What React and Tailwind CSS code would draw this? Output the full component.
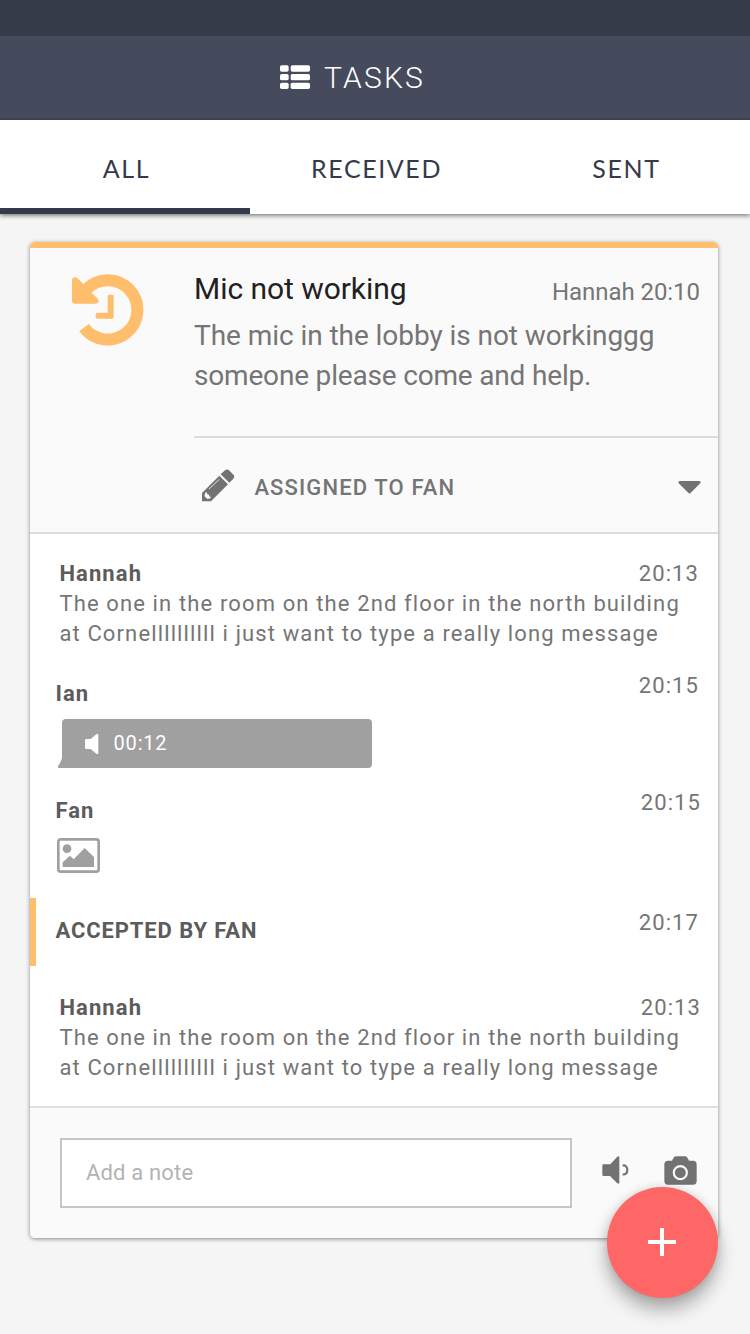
const ListIcon = () => (
  <svg className="h-6 w-[30px]" viewBox="0 0 90 72" fill="#fff">
    <rect x="0" y="1" width="26" height="19" rx="5" />
    <rect x="32" y="1" width="58" height="19" rx="5" />
    <rect x="0" y="27" width="26" height="19" rx="5" />
    <rect x="32" y="27" width="58" height="19" rx="5" />
    <rect x="0" y="53" width="26" height="19" rx="5" />
    <rect x="32" y="53" width="58" height="19" rx="5" />
  </svg>
);

const HistoryIcon = () => (
  <svg className="h-[72px] w-[72px]" viewBox="156 130 216 216">
    <path d="M200 175 A89 89 0 1 1 192 291" fill="none" stroke="#ffbe6b" strokeWidth="36" />
    <path
      d="M156 150 Q156 140 165 140 Q170 140 174 144 L190 160 L215 186 L233 204 Q238 210 235 215 Q232 219 227 219 H165 Q156 219 156 210 Z M263 197 Q263 192 268 192 H276 Q281 192 281 197 V259 Q281 264 276 264 H232 Q227 264 227 259 V251 Q227 246 232 246 H263 Z"
      fill="#ffbe6b"
    />
  </svg>
);

const PencilIcon = () => (
  <svg className="h-[33px] w-[33px]" viewBox="36 28 99 99">
    <path
      d="M36 125 V100 L88 48 L114 74 L63 125 Z M92 44 L105 32 Q111 27 117 32 L131 46 Q135 51 130 57 L118 69 Z"
      fill="#727272"
    />
    <path d="M57 88 L88 59" stroke="#fafafa" strokeWidth="2.5" />
    <path d="M47 97 L51 99 L52 104 L57 105 L58 110 L62 112 L62 116 L52 118 L43 109 Z" fill="#fafafa" />
  </svg>
);

const CaretIcon = () => (
  <svg className="mt-1 h-[13px] w-[23px]" viewBox="0 0 23 13">
    <path d="M1.5 0 H21.5 Q23.5 .6 22 2.5 L13 11.6 Q11.5 13.4 10 11.6 L1 2.5 Q-.5 .6 1.5 0 Z" fill="#727272" />
  </svg>
);

const BubbleTail = () => (
  <svg className="h-[10px] w-1 self-end overflow-visible" viewBox="0 0 4 10">
    <path d="M4.5 0 V10 H1 Q-.8 9.6 0 8 Q3 4 4 0 Z" fill="#a0a0a0" />
  </svg>
);

const PlayIcon = () => (
  <svg className="h-5 w-[14px]" viewBox="195 547 42 60">
    <path d="M198 562 H212 L229 548 Q235 545 235 551 V603 Q235 609 229 606 L212 592 H198 Q195 592 195 589 V565 Q195 562 198 562 Z" fill="#fff" />
  </svg>
);

const ImageIcon = () => (
  <svg className="h-[35px] w-[43px]" viewBox="111 174 129 105">
    <rect x="115" y="178" width="121" height="97" rx="7" fill="none" stroke="#a0a0a0" strokeWidth="8" />
    <circle cx="141" cy="206" r="13" fill="#a0a0a0" />
    <path d="M128 261 V247 L150 227 L161 238 L194 204 L222 231 V261 Z" fill="#a0a0a0" />
  </svg>
);

const SpeakerIcon = () => (
  <svg className="h-7 w-7" viewBox="125 197 84 84">
    <path d="M130 222 H150 L170 200 Q177 195 177 202 V276 Q177 283 170 278 L149 257 H130 Q126 257 126 253 V226 Q126 222 130 222 Z" fill="#727272" />
    <path d="M187 226 C194 223 201 229 201 239 C201 249 194 254 187 252" fill="none" stroke="#727272" strokeWidth="6.5" />
  </svg>
);

const CameraIcon = () => (
  <svg className="h-[29px] w-[33px]" viewBox="311 197 99 87">
    <path d="M323 211 H335 L338 205 Q341 198 348 198 H373 Q380 198 383 205 L386 211 H398 Q409 212 409 222 V272 Q409 283 398 283 H323 Q312 283 312 272 V222 Q312 212 323 211 Z" fill="#727272" />
    <circle cx="360" cy="247" r="19.5" fill="none" stroke="#fafafa" strokeWidth="6.5" />
  </svg>
);

const name = "text-[22px] leading-[29px] font-bold tracking-[1.1px] text-[#5c5c5c]";
const time = "text-[22px] leading-[29px] tracking-[1.1px] text-[#757575]";

const Message = ({ shift }) => (
  <div className="pl-[29.4px]">
    <div className={`flex justify-between ${shift}`}>
      <p className={name}>Hannah</p>
      <p className={time}>20:13</p>
    </div>
    <p className="mt-px text-[22px] leading-[30px] tracking-[1.13px] whitespace-nowrap text-[#757575]">
      The one in the room on the 2nd floor in the north building
      <br />
      at Cornellllllllll i just want to type a really long message
    </p>
  </div>
);

export default function App() {
  return (
    <div className="relative h-[1334px] w-[750px] overflow-hidden bg-[#f5f5f5] font-['Roboto',sans-serif]">
      <div className="h-9 bg-[#353b48]" />
      <header className="flex h-[84px] items-center gap-[14px] border-b-2 border-[#404557] bg-[#454a5c] pl-[280px]">
        <ListIcon />
        <h1 className="text-[30px] leading-[35px] font-[350] tracking-[2.2px] text-white">TASKS</h1>
      </header>
      <nav className="grid h-[94px] grid-cols-3 bg-white text-center font-['Lato',sans-serif] text-[25px] leading-[96px] tracking-[1.6px] text-[#353a4a] shadow-[0_2px_4px_rgba(0,0,0,0.45)]">
        <div className="h-[94px] border-b-[6px] border-[#353a4a] pl-[3px]">ALL</div>
        <div className="pl-[3px]">RECEIVED</div>
        <div className="pl-[3px]">SENT</div>
      </nav>

      <main className="mt-7 ml-[30px] w-[688px] overflow-hidden rounded-[5px] bg-white shadow-[0_1px_4px_rgba(0,0,0,0.45)]">
        <section className="flex h-[292px] border-t-[6px] border-b-2 border-t-[#ffbe6b] border-b-[#dcdcdc] bg-[#fafafa]">
          <div className="w-[164px] pt-[25.5px] pl-[41.8px]">
            <HistoryIcon />
          </div>
          <div className="flex flex-1 flex-col">
            <div className="h-[190px] border-b-2 border-[#dcdcdc] pt-[23px]">
              <div className="flex justify-between pr-[18px]">
                <h2 className="text-[30px] leading-[35px] tracking-[-0.05px] text-[#212121]">Mic not working</h2>
                <p className="pt-[7px] text-2xl leading-7 tracking-[-0.05px] text-[#757575]">Hannah 20:10</p>
              </div>
              <p className="mt-[10px] text-[28px] leading-10 text-[#757575]">
                <span className="tracking-[-0.06px]">The mic in the lobby is not workinggg</span>
                <br />
                <span className="tracking-[-0.18px]">someone please come and help.</span>
              </p>
            </div>
            <div className="flex flex-1 items-center pr-[17px] pl-2">
              <PencilIcon />
              <p className="flex-1 pt-1 pl-[19.4px] text-[22px] leading-[29px] font-medium tracking-[1.13px] text-[#757575]">ASSIGNED TO FAN</p>
              <CaretIcon />
            </div>
          </div>
        </section>

        <section className="h-[572px] pt-[25px]">
          <Message shift="pr-[19px]" />
          <div className="mt-[22px] flex h-[117px] justify-between pr-[19px] pl-[25.4px]">
            <div className="pt-2">
              <p className={name}>Ian</p>
              <div className="mt-[11px] ml-[2.2px] flex">
                <BubbleTail />
                <div className="flex h-[49px] w-[310.4px] items-center gap-[15px] rounded-[4px] rounded-bl-none bg-[#a0a0a0] pl-[23px]">
                  <PlayIcon />
                  <span className="-mt-0.5 text-[20px] leading-6 tracking-[0.8px] text-white">00:12</span>
                </div>
              </div>
            </div>
            <p className={time}>20:15</p>
          </div>
          <div className="flex h-[110px] justify-between pr-[17px] pl-[25.4px]">
            <div className="pt-2">
              <p className={name}>Fan</p>
              <div className="mt-[13px] ml-[1.6px]">
                <ImageIcon />
              </div>
            </div>
            <p className={time}>20:15</p>
          </div>
          <div className="flex h-[68px] justify-between border-l-[6px] border-[#ffbe6b] pt-[10px] pr-[19px] pl-[19.5px]">
            <p className="pt-2 text-[22px] leading-[29px] font-bold tracking-[0.88px] text-[#5c5c5c]">ACCEPTED BY FAN</p>
            <p className={time}>20:17</p>
          </div>
          <div className="h-[27px]" />
          <Message shift="pr-[17px]" />
        </section>

        <section className="flex h-[132px] items-start border-t-2 border-[#e0e0e0] bg-[#fafafa] pt-[30px] pl-[30px]">
          <div className="flex h-[70px] w-[512px] items-center border-2 border-[#c6c6c6] bg-white pb-0.5 pl-6">
            <span className="text-[22px] leading-[29px] tracking-[0.16px] text-[#b3b3b3]">Add a note</span>
          </div>
          <div className="flex items-start gap-[34px] pt-[17.7px] pl-[29.5px]">
            <SpeakerIcon />
            <CameraIcon />
          </div>
        </section>
      </main>

      <button className="absolute top-[1186.5px] left-[606.5px] flex h-[111px] w-[111px] items-center justify-center rounded-full bg-[#ff6666] shadow-[0_12px_18px_rgba(0,0,0,0.3),0_0_10px_rgba(0,0,0,0.12)]">
        <svg className="h-7 w-7" viewBox="0 0 28 28">
          <path d="M12 0 H16 V12 H28 V16 H16 V28 H12 V16 H0 V12 H12 Z" fill="#fff" />
        </svg>
      </button>
    </div>
  );
}
